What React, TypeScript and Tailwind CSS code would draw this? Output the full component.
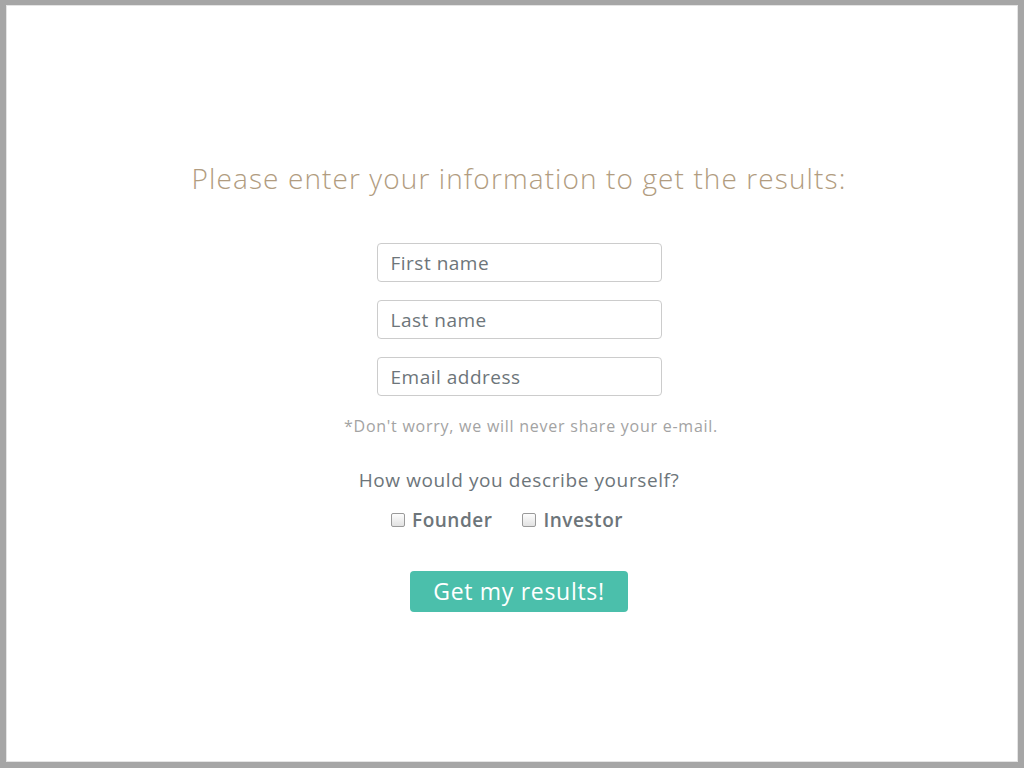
import React from "react";

export default function App() {
  const font = { fontFamily: "'Open Sans', Lato, sans-serif" };
  return (
    <div className="w-[1024px] h-[768px] bg-[#a6a6a6] pt-[5px] pl-[6px] pr-[6px] pb-[6px]" style={font}>
      <div className="w-full h-full bg-white border border-[#e4e4e4] flex flex-col items-center pl-[14px]">
        <h1 className="mt-[155px] text-[28px] leading-[34px] font-light text-[#b19c80] tracking-[1.1px]">
          Please enter your information to get the results:
        </h1>
        <div className="mt-[48px] flex flex-col gap-[18px]">
          {["First name", "Last name", "Email address"].map((p) => (
            <input
              key={p}
              placeholder={p}
              className="w-[285px] h-[39px] border border-[#cccccc] rounded-[4px] px-[13px] text-[19px] tracking-[0.5px] text-[#6d757a] placeholder:text-[#6d757a] outline-none"
              style={font}
            />
          ))}
        </div>
        <p className="mt-[20px] ml-[24px] text-[16px] leading-[20px] tracking-[0.75px] text-[#a3a3a3]">
          *Don't worry, we will never share your e-mail.
        </p>
        <p className="mt-[32px] text-[19px] leading-[24px] tracking-[0.6px] text-[#6d757a]">How would you describe yourself?</p>
        <div className="mt-[16px] mr-[24px] flex items-center gap-[30px] h-[24px]">
          <label className="flex items-center gap-[7px] text-[19px] tracking-[0.5px] font-semibold text-[#6d757a]">
            <span className="w-[14px] h-[14px] rounded-[2px] border border-[#9a9a9a] bg-gradient-to-b from-[#fdfdfd] to-[#e2e2e2] inline-block" />
            Founder
          </label>
          <label className="flex items-center gap-[7px] text-[19px] tracking-[0.5px] font-semibold text-[#6d757a]">
            <span className="w-[14px] h-[14px] rounded-[2px] border border-[#9a9a9a] bg-gradient-to-b from-[#fdfdfd] to-[#e2e2e2] inline-block" />
            Investor
          </label>
        </div>
        <button className="mt-[39px] w-[218px] h-[41px] rounded-[4px] bg-[#4bbfab] text-white text-[23px] tracking-[0.7px] leading-[41px]" style={font}>
          Get my results!
        </button>
      </div>
    </div>
  );
}
